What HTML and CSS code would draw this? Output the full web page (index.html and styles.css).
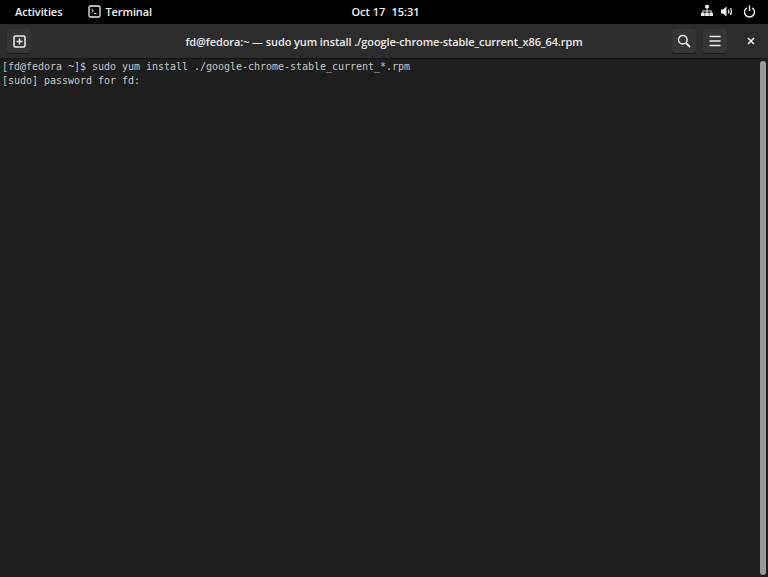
FILE: index.html
```html
<!DOCTYPE html>
<html lang="en">
<head>
<meta charset="utf-8">
<title>Terminal</title>
<link rel="stylesheet" href="styles.css">
</head>
<body>
<div class="topbar">
  <div class="top-left">
    <span class="top-label">Activities</span>
    <span class="app">
      <svg class="app-icon" width="13" height="13" viewBox="0 0 13 13"><rect x="1" y="1" width="11" height="11" rx="1.5" fill="none" stroke="#f0f0f0" stroke-width="1.3"/><path d="M3.5 4l2 1.8-2 1.8M6 8.5h2.5" fill="none" stroke="#f0f0f0"/></svg>
      <span class="top-label">Terminal</span>
    </span>
  </div>
  <div class="clock"><span>Oct 17</span><span>15:31</span></div>
  <div class="tray">
    <svg width="12" height="12" viewBox="0 0 13 13"><path fill="#eee" d="M4.500 0h4v3.500h-4zM6 3.500h1V6h4.500v2.500h-1V7H7v1.500H6V7H2.500v1.500h-1V6H6zM0 8.500h4V12H0zM4.500 8.500h4V12h-4zM9 8.500h4V12H9z"/></svg>
    <svg width="13" height="13" viewBox="0 0 13 13"><path fill="#eee" d="M0 4.500h2L5.500 1.500v10L2 8.500H0z"/><path d="M7.300 4.500q1.200 2 0 4M9.500 3q2 3.500 0 7" fill="none" stroke="#eee" stroke-width="1.200"/></svg>
    <svg width="13" height="13" viewBox="0 0 13 13"><path d="M3.800 2.800a5 5 0 1 0 5.400 0M6.500 0.500v5.500" fill="none" stroke="#eee" stroke-width="1.400"/></svg>
  </div>
</div>
<div class="headerbar">
  <button class="btn new-tab"><svg width="13" height="13" viewBox="0 0 13 13"><rect x="1" y="1" width="11" height="11" rx="1.500" fill="none" stroke="#eee" stroke-width="1.500"/><path d="M6.500 3.500v6M3.500 6.500h6" stroke="#eee" stroke-width="1.500"/></svg></button>
  <div class="title">fd@fedora:~ — sudo yum install ./google-chrome-stable_current_x86_64.rpm</div>
  <div class="actions">
    <button class="btn"><svg width="14" height="14" viewBox="0 0 14 14"><circle cx="5.800" cy="5.800" r="4.300" fill="none" stroke="#eee" stroke-width="1.500"/><path d="M9 9l4 4" stroke="#eee" stroke-width="1.800"/></svg></button>
    <button class="btn"><svg width="12" height="12" viewBox="0 0 12 12"><path d="M0.500 1.500h11M0.500 6h11M0.500 10.500h11" stroke="#eee" stroke-width="1.400"/></svg></button>
    <button class="close"><svg width="8" height="8" viewBox="0 0 8 8"><path d="M1 1l6 6M7 1l-6 6" stroke="#eee" stroke-width="1.600"/></svg></button>
  </div>
</div>
<div class="terminal">
  <pre class="output">[fd@fedora ~]$ sudo yum install ./google-chrome-stable_current_*.rpm
[sudo] password for fd:</pre>
  <div class="scrollbar"><div class="thumb"></div></div>
</div>
</body>
</html>
```
FILE: styles.css
```css
* { box-sizing: border-box; }
html, body { margin: 0; height: 100%; overflow: hidden; }
body {
  width: 768px;
  height: 577px;
  display: flex;
  flex-direction: column;
  background: #1e1e1e;
  font-family: "Open Sans", "Noto Sans", sans-serif;
}
.topbar {
  height: 24px;
  flex: none;
  background: #000;
  color: #f2f2f2;
  display: grid;
  grid-template-columns: 1fr auto 1fr;
  align-items: center;
  font-size: 11px;
  font-weight: 600;
  padding: 0 12px 2px 15px;
}
.top-left { display: flex; align-items: center; gap: 26px; letter-spacing: -0.08px; }
.app { display: flex; align-items: center; gap: 4px; }
.clock { display: flex; gap: 6px; }
.tray { display: flex; justify-content: flex-end; align-items: center; gap: 8px; }
.tray svg:nth-child(2) { margin-right: 1px; }
.headerbar {
  height: 35px;
  flex: none;
  background: #2c2c2c;
  border-bottom: 1px solid #161616;
  display: grid;
  grid-template-columns: 1fr auto 1fr;
  align-items: center;
}
.title {
  color: #ececec;
  font-size: 11px;
  font-weight: 600;
  letter-spacing: -0.1px;
}
.actions { display: flex; justify-content: flex-end; align-items: center; gap: 7px; }
.btn, .close {
  height: 24px;
  padding: 0;
  border: 0;
  border-radius: 3px;
  display: flex;
  align-items: center;
  justify-content: center;
}
.btn { width: 24px; background: #353535; box-shadow: 0 1px 0 #1c1c1c; }
.close { background: transparent; width: 34px; }
.new-tab { justify-self: start; margin-left: 7px; }
.terminal {
  flex: 1;
  display: flex;
  min-height: 0;
}
.output {
  flex: 1;
  margin: 0;
  padding: 1px 2px;
  color: #c8c8c8;
  font-family: "DejaVu Sans Mono", "Liberation Mono", monospace;
  font-size: 10px;
  line-height: 14px;
  letter-spacing: -0.02px;
}
.scrollbar {
  width: 8px;
  padding: 2px 2px 2px 0;
  background: #1e1e1e;
  display: flex;
}
.thumb {
  flex: 1;
  background: #9a9a9a;
  border-radius: 3px;
}
```
